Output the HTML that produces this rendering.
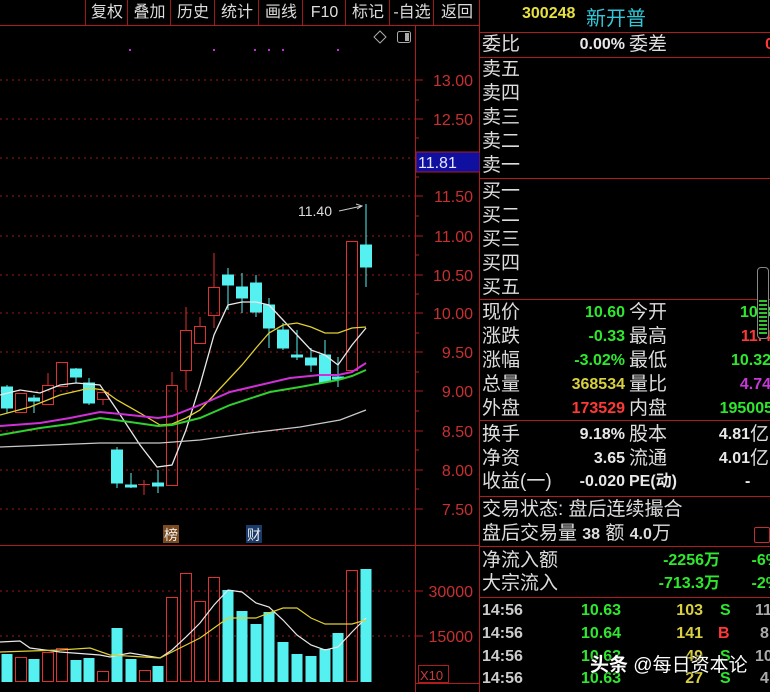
<!DOCTYPE html>
<html><head><meta charset="utf-8"><style>
body{margin:0;background:#000;width:770px;height:692px;overflow:hidden;position:relative;font-family:"Liberation Sans","Noto Sans CJK SC",sans-serif;}
.a{position:absolute;white-space:nowrap;}
.tb{position:absolute;top:0;height:25px;line-height:25px;font-size:16px;color:#ddd;text-align:center;border-left:1px solid #a01818;}
.l{position:absolute;left:482px;font-size:19px;color:#ddd;line-height:24px;}
.v{position:absolute;font-size:16px;font-weight:bold;line-height:24px;text-align:right;}
.hl{position:absolute;left:480px;width:290px;height:1px;background:#b01c1c;}
.g{color:#2ee82e}.r{color:#ff3838}.y{color:#d8d040}.w{color:#e8e8e8}.m{color:#c838d8}
</style></head><body>
<div class="tb" style="left:85px;width:42px">复权</div>
<div class="tb" style="left:127px;width:43px">叠加</div>
<div class="tb" style="left:170px;width:44px">历史</div>
<div class="tb" style="left:214px;width:44px">统计</div>
<div class="tb" style="left:258px;width:44px">画线</div>
<div class="tb" style="left:302px;width:43px">F10</div>
<div class="tb" style="left:345px;width:44px">标记</div>
<div class="tb" style="left:389px;width:44px">-自选</div>
<div class="tb" style="left:433px;width:46px">返回</div>
<svg class="a" style="left:0;top:0" width="480" height="692">
<line x1="0" y1="25.5" x2="480" y2="25.5" stroke="#b01c1c"/>
<line x1="415.5" y1="25" x2="415.5" y2="692" stroke="#b01c1c"/>
<line x1="0" y1="545.5" x2="480" y2="545.5" stroke="#b01c1c"/>
<line x1="479.5" y1="0" x2="479.5" y2="692" stroke="#b01c1c"/>
<g stroke="#a01818" stroke-dasharray="2,4">
<line x1="0" y1="80" x2="415" y2="80"/><line x1="0" y1="119" x2="415" y2="119"/><line x1="0" y1="158" x2="415" y2="158"/><line x1="0" y1="196" x2="415" y2="196"/><line x1="0" y1="236" x2="415" y2="236"/><line x1="0" y1="275" x2="415" y2="275"/><line x1="0" y1="313" x2="415" y2="313"/><line x1="0" y1="352" x2="415" y2="352"/><line x1="0" y1="391" x2="415" y2="391"/><line x1="0" y1="431" x2="415" y2="431"/><line x1="0" y1="470" x2="415" y2="470"/><line x1="0" y1="509" x2="415" y2="509"/><line x1="0" y1="591" x2="415" y2="591"/><line x1="0" y1="636" x2="415" y2="636"/>
</g>
<g stroke="#b01c1c">
<line x1="415" y1="80" x2="423" y2="80"/><line x1="415" y1="119" x2="423" y2="119"/><line x1="415" y1="196" x2="423" y2="196"/><line x1="415" y1="236" x2="423" y2="236"/><line x1="415" y1="275" x2="423" y2="275"/><line x1="415" y1="313" x2="423" y2="313"/><line x1="415" y1="352" x2="423" y2="352"/><line x1="415" y1="391" x2="423" y2="391"/><line x1="415" y1="431" x2="423" y2="431"/><line x1="415" y1="470" x2="423" y2="470"/><line x1="415" y1="509" x2="423" y2="509"/><line x1="415" y1="591" x2="423" y2="591"/><line x1="415" y1="636" x2="423" y2="636"/>
<line x1="415" y1="100" x2="419" y2="100"/><line x1="415" y1="138" x2="419" y2="138"/><line x1="415" y1="177" x2="419" y2="177"/><line x1="415" y1="216" x2="419" y2="216"/><line x1="415" y1="255" x2="419" y2="255"/><line x1="415" y1="294" x2="419" y2="294"/><line x1="415" y1="333" x2="419" y2="333"/><line x1="415" y1="372" x2="419" y2="372"/><line x1="415" y1="411" x2="419" y2="411"/><line x1="415" y1="450" x2="419" y2="450"/><line x1="415" y1="489" x2="419" y2="489"/>
</g>
<rect x="416" y="152" width="64" height="20" fill="#1010a0" stroke="#b01c1c"/>
<text x="418" y="168" fill="#e8e8ff" font-size="16" font-family="Liberation Sans">11.81</text>
<g fill="#c83030" font-size="16" font-family="Liberation Sans" text-anchor="end">
<text x="473" y="86">13.00</text><text x="473" y="125">12.50</text><text x="473" y="202">11.50</text><text x="473" y="242">11.00</text><text x="473" y="281">10.50</text><text x="473" y="319">10.00</text><text x="473" y="358">9.50</text><text x="473" y="397">9.00</text><text x="473" y="437">8.50</text><text x="473" y="476">8.00</text><text x="473" y="515">7.50</text><text x="473" y="597">30000</text><text x="473" y="642">15000</text>
</g>
<rect x="418.5" y="665.5" width="30" height="17" fill="none" stroke="#b01c1c"/>
<text x="420" y="680" fill="#c83c3c" font-size="13" font-family="Liberation Sans">X10</text>
<line x1="415" y1="683.5" x2="480" y2="683.5" stroke="#b01c1c"/>
<g fill="#c030d0"><rect x="129" y="49" width="2" height="2"/><rect x="213" y="49" width="2" height="2"/><rect x="254" y="49" width="2" height="2"/><rect x="268" y="49" width="2" height="2"/><rect x="282" y="49" width="2" height="2"/><rect x="337" y="49" width="2" height="2"/></g>
<path d="M380 31 L386 37 L380 43 L374 37 Z" fill="none" stroke="#aaa"/>
<rect x="397.5" y="31.5" width="13" height="11" rx="2" fill="none" stroke="#aaa"/><rect x="405" y="33" width="4" height="8" fill="#aaa"/>
<text x="298" y="216" fill="#ddd" font-size="14" font-family="Liberation Sans">11.40</text>
<path d="M339 211 L362 206 M356 204 L362 206 L357 209" stroke="#ccc" fill="none"/>
<g stroke-width="1">
<g stroke="#55f0f0" fill="#55f0f0">
<line x1="7" y1="385" x2="7" y2="413"/><rect x="1.5" y="387" width="11" height="21"/>
<line x1="34" y1="395" x2="34" y2="413"/><rect x="28.5" y="398" width="11" height="3"/>
<line x1="76" y1="368" x2="76" y2="383"/><rect x="70.5" y="369" width="11" height="8"/>
<line x1="89" y1="378" x2="89" y2="405"/><rect x="83.5" y="383" width="11" height="20"/>
<line x1="117" y1="447" x2="117" y2="488"/><rect x="111.5" y="450" width="11" height="33"/>
<line x1="131" y1="473" x2="131" y2="488"/><rect x="125.5" y="485" width="11" height="2"/>
<line x1="158" y1="470" x2="158" y2="493"/><rect x="152.5" y="483" width="11" height="3"/>
<line x1="228" y1="268" x2="228" y2="310"/><rect x="222.5" y="275" width="11" height="10"/>
<line x1="242" y1="273" x2="242" y2="313"/><rect x="236.5" y="287" width="11" height="11"/>
<line x1="256" y1="275" x2="256" y2="317"/><rect x="250.5" y="283" width="11" height="29"/>
<line x1="269" y1="298" x2="269" y2="348"/><rect x="263.5" y="305" width="11" height="23"/>
<line x1="283" y1="323" x2="283" y2="350"/><rect x="277.5" y="330" width="11" height="18"/>
<line x1="297" y1="330" x2="297" y2="360"/><rect x="291.5" y="355" width="11" height="2"/>
<line x1="311" y1="348" x2="311" y2="372"/><rect x="305.5" y="358" width="11" height="7"/>
<line x1="325" y1="340" x2="325" y2="382"/><rect x="319.5" y="355" width="11" height="27"/>
<line x1="338" y1="357" x2="338" y2="387"/><rect x="332.5" y="377" width="11" height="2"/>
<line x1="366" y1="204" x2="366" y2="287"/><rect x="360.5" y="245" width="11" height="22"/>
</g>
<g stroke="#e03030" fill="none">
<rect x="15.5" y="393.5" width="11" height="19"/>
<line x1="48" y1="373" x2="48" y2="385"/><rect x="42.5" y="385.5" width="11" height="19"/>
<rect x="56.5" y="362.5" width="11" height="24"/>
<line x1="103" y1="400" x2="103" y2="405"/><rect x="97.5" y="392.5" width="11" height="7"/>
<line x1="144" y1="480" x2="144" y2="495"/><line x1="138" y1="484.5" x2="150" y2="484.5"/>
<line x1="172" y1="372" x2="172" y2="385"/><rect x="166.5" y="385.5" width="11" height="100"/>
<line x1="186" y1="307" x2="186" y2="330"/><line x1="186" y1="370" x2="186" y2="390"/><rect x="180.5" y="330.5" width="11" height="40"/>
<line x1="200" y1="317" x2="200" y2="326"/><rect x="194.5" y="326.5" width="11" height="17"/>
<line x1="214" y1="253" x2="214" y2="287"/><line x1="214" y1="315" x2="214" y2="328"/><rect x="208.5" y="287.5" width="11" height="28"/>
<rect x="346.5" y="241.5" width="11" height="129"/>
</g>
</g>
<g fill="none" stroke-width="1.3">
<polyline stroke="#e8e8e8" points="0,395 20,390 40,393 60,385 76,383 100,385 117,410 140,445 157,467 172,465 186,430 200,385 214,335 228,305 242,302 256,302 269,305 283,320 297,335 311,350 325,355 338,365 352,345 366,328"/>
<polyline stroke="#e0d030" points="0,415 30,407 60,395 90,388 103,390 117,400 140,413 160,425 172,424 186,418 200,410 214,395 228,380 242,365 256,348 269,333 283,325 297,323 311,327 325,333 338,333 352,328 366,327"/>
<polyline stroke="#d030d8" stroke-width="2" points="0,426 40,423 70,418 100,412 130,415 158,418 172,416 200,405 230,392 260,385 290,378 320,375 338,375 352,372 366,363"/>
<polyline stroke="#30d030" stroke-width="2" points="0,435 40,428 70,424 100,418 130,422 158,426 172,425 200,418 230,405 270,392 300,387 338,380 352,376 366,370"/>
<polyline stroke="#c8c8c8" points="0,447 50,445 100,443 160,443 200,440 250,433 300,427 340,420 366,410"/>
</g>
<rect x="163" y="525" width="16" height="18" fill="#7a4a20"/><text x="164" y="540" fill="#eee" font-size="14">榜</text>
<rect x="246" y="525" width="16" height="18" fill="#1a3a6a"/><text x="247" y="540" fill="#eee" font-size="14">财</text>
<g fill="#55f0f0">
<rect x="1.5" y="654" width="11" height="28"/><rect x="28.5" y="659" width="11" height="23"/><rect x="70.5" y="660" width="11" height="22"/><rect x="83.5" y="658" width="11" height="24"/><rect x="111.5" y="628" width="11" height="54"/><rect x="125.5" y="659" width="11" height="23"/><rect x="152.5" y="666" width="11" height="16"/><rect x="222.5" y="590" width="11" height="92"/><rect x="236.5" y="611" width="11" height="71"/><rect x="250.5" y="624" width="11" height="58"/><rect x="263.5" y="612" width="11" height="70"/><rect x="277.5" y="642" width="11" height="40"/><rect x="291.5" y="654" width="11" height="28"/><rect x="305.5" y="656" width="11" height="26"/><rect x="319.5" y="649" width="11" height="33"/><rect x="332.5" y="633" width="11" height="49"/><rect x="360.5" y="569" width="11" height="113"/>
</g>
<g fill="none" stroke="#e03030">
<rect x="15.5" y="657.5" width="11" height="24"/><rect x="42.5" y="652.5" width="11" height="29"/><rect x="56.5" y="648.5" width="11" height="33"/><rect x="97.5" y="671.5" width="11" height="10"/><rect x="139.5" y="670.5" width="11" height="11"/><rect x="166.5" y="597.5" width="11" height="84"/><rect x="180.5" y="573.5" width="11" height="108"/><rect x="194.5" y="601.5" width="11" height="80"/><rect x="208.5" y="577.5" width="11" height="104"/><rect x="346.5" y="570.5" width="11" height="111"/>
</g>
<g fill="none" stroke-width="1.2">
<polyline stroke="#e8e8e8" points="0,642 20,641 30,648 60,652 100,655 110,657 130,653 160,658 172,650 186,637 200,623 214,605 228,590 242,592 256,603 269,607 283,620 297,635 311,645 325,650 338,647 352,632 366,618"/>
<polyline stroke="#e0d030" points="0,652 60,650 90,648 110,655 160,658 172,652 200,638 228,618 242,618 256,618 269,613 283,608 297,608 311,618 325,624 338,624 352,624 366,620"/>
</g>
</svg>
<div class="hl" style="top:32px"></div><div class="hl" style="top:57px"></div><div class="hl" style="top:178px"></div><div class="hl" style="top:299px"></div><div class="hl" style="top:420px"></div><div class="hl" style="top:496px"></div><div class="hl" style="top:546px"></div><div class="hl" style="top:597px"></div>
<div class="a" style="left:522px;top:5px;font-size:16px;font-weight:bold;color:#e8e040">300248</div>
<div class="a" style="left:586px;top:2px;font-size:20px;color:#30c8d8">新开普</div>
<div class="l" style="top:33px">委比</div><div class="v w" style="left:540px;width:85px;top:33px">0.00%</div><div class="l" style="left:629px;top:33px">委差</div><div class="v r" style="left:700px;width:74px;top:33px">0</div>
<div class="l" style="top:58px">卖五</div><div class="l" style="top:82px">卖四</div><div class="l" style="top:106px">卖三</div><div class="l" style="top:130px">卖二</div><div class="l" style="top:154px">卖一</div>
<div class="l" style="top:180px">买一</div><div class="l" style="top:204px">买二</div><div class="l" style="top:228px">买三</div><div class="l" style="top:252px">买四</div><div class="l" style="top:276px">买五</div>
<div class="l" style="top:301px">现价</div><div class="v g" style="left:540px;width:85px;top:301px">10.60</div><div class="l" style="left:629px;top:301px">今开</div><div class="v g" style="left:690px;width:90px;top:301px">10.80</div>
<div class="l" style="top:325px">涨跌</div><div class="v g" style="left:540px;width:85px;top:325px">-0.33</div><div class="l" style="left:629px;top:325px">最高</div><div class="v r" style="left:690px;width:90px;top:325px">11.40</div>
<div class="l" style="top:349px">涨幅</div><div class="v g" style="left:540px;width:85px;top:349px">-3.02%</div><div class="l" style="left:629px;top:349px">最低</div><div class="v g" style="left:690px;width:81px;top:349px">10.32</div>
<div class="l" style="top:373px">总量</div><div class="v y" style="left:540px;width:85px;top:373px">368534</div><div class="l" style="left:629px;top:373px">量比</div><div class="v m" style="left:690px;width:81px;top:373px">4.74</div>
<div class="l" style="top:397px">外盘</div><div class="v r" style="left:540px;width:85px;top:397px">173529</div><div class="l" style="left:629px;top:397px">内盘</div><div class="v g" style="left:680px;width:93px;top:397px">195005</div>
<div class="a" style="left:757px;top:267px;width:10px;height:70px;border:1px solid #888;border-radius:4px;background:#000;"></div>
<div class="a" style="left:759px;top:300px;width:8px;height:36px;background:repeating-linear-gradient(#30c030 0 2px,#000 2px 4px)"></div>
<div class="l" style="top:423px">换手</div><div class="v w" style="left:540px;width:85px;top:423px">9.18%</div><div class="l" style="left:629px;top:423px">股本</div><div class="v w" style="left:690px;width:60px;top:423px">4.81</div><div class="l" style="left:750px;top:423px">亿</div>
<div class="l" style="top:447px">净资</div><div class="v w" style="left:540px;width:85px;top:447px">3.65</div><div class="l" style="left:629px;top:447px">流通</div><div class="v w" style="left:690px;width:60px;top:447px">4.01</div><div class="l" style="left:750px;top:447px">亿</div>
<div class="l" style="top:470px">收益(一)</div><div class="v w" style="left:540px;width:85px;top:470px">-0.020</div><div class="v w" style="left:629px;top:470px;text-align:left">PE(动)</div><div class="v w" style="left:745px;top:470px">-</div>
<div class="l" style="top:498px">交易状态: 盘后连续撮合</div>
<div class="l" style="top:522px">盘后交易量 <b style="font-size:16px">38</b> 额 <b style="font-size:16px">4.0</b>万</div>
<div class="a" style="left:754px;top:527px;width:14px;height:14px;border:1px solid #c03030;border-radius:2px;"></div>
<div class="l" style="top:549px">净流入额</div><div class="v g" style="left:600px;width:120px;top:549px">-2256万</div><div class="v g" style="left:740px;width:40px;top:549px">-6%</div>
<div class="l" style="top:572px">大宗流入</div><div class="v g" style="left:600px;width:120px;top:572px">-713.3万</div><div class="v g" style="left:740px;width:40px;top:572px">-2%</div>
<div class="v w" style="left:482px;top:599px;text-align:left;color:#ccc">14:56</div><div class="v g" style="left:560px;width:61px;top:599px">10.63</div><div class="v y" style="left:650px;width:53px;top:599px">103</div><div class="v g" style="left:720px;top:599px">S</div><div class="v" style="left:755px;top:599px;color:#aaa">11</div>
<div class="v w" style="left:482px;top:622px;text-align:left;color:#ccc">14:56</div><div class="v g" style="left:560px;width:61px;top:622px">10.64</div><div class="v y" style="left:650px;width:53px;top:622px">141</div><div class="v r" style="left:718px;top:622px">B</div><div class="v" style="left:760px;top:622px;color:#aaa">8</div>
<div class="v w" style="left:482px;top:645px;text-align:left;color:#ccc">14:56</div><div class="v g" style="left:560px;width:61px;top:645px">10.63</div><div class="v y" style="left:650px;width:53px;top:645px">49</div><div class="v g" style="left:720px;top:645px">S</div><div class="v" style="left:755px;top:645px;color:#aaa">10</div>
<div class="v w" style="left:482px;top:667px;text-align:left;color:#ccc">14:56</div><div class="v g" style="left:560px;width:61px;top:667px">10.63</div><div class="v y" style="left:650px;width:53px;top:667px">27</div><div class="v g" style="left:720px;top:667px">S</div><div class="v" style="left:760px;top:667px;color:#aaa">4</div>
<div class="a" style="left:590px;top:650px;font-size:19px;color:#fff;text-shadow:0 0 3px #000,0 0 2px #000"><b>头条</b> @每日资本论</div>
</body></html>
